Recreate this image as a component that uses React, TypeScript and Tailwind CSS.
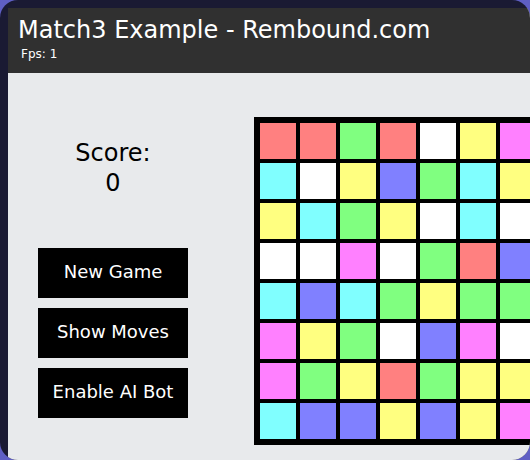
import React from "react";

// tile palette, same order as the game uses
const colors = [
  "#ff8080", // 0 red
  "#80ff80", // 1 green
  "#8080ff", // 2 blue
  "#ffff80", // 3 yellow
  "#ff80ff", // 4 magenta
  "#80ffff", // 5 cyan
  "#ffffff", // 6 white
];

const tileClass = [
  "bg-[#ff8080]",
  "bg-[#80ff80]",
  "bg-[#8080ff]",
  "bg-[#ffff80]",
  "bg-[#ff80ff]",
  "bg-[#80ffff]",
  "bg-[#ffffff]",
];

const board: number[][] = [
  [0, 0, 1, 0, 6, 3, 4, 1],
  [5, 6, 3, 2, 1, 5, 3, 2],
  [3, 5, 1, 3, 6, 5, 6, 4],
  [6, 6, 4, 6, 1, 0, 2, 3],
  [5, 2, 5, 1, 3, 1, 1, 0],
  [4, 3, 1, 6, 2, 4, 6, 5],
  [4, 1, 3, 0, 1, 3, 3, 2],
  [5, 2, 2, 3, 2, 3, 4, 6],
];

const buttons = ["New Game", "Show Moves", "Enable AI Bot"];

const font = { fontFamily: '"DejaVu Sans", Verdana, sans-serif' };

export default function App() {
  return (
    <div className="w-[530px] h-[460px] bg-[#5f5fc4]">
      <div
        className="w-full h-full rounded-[18px] overflow-hidden bg-[#1a1a33] pl-[8px] pt-[8px]"
        style={font}
      >
        <div className="w-[800px] h-[600px] bg-[#e8eaec]">
          <div className="h-[65px] bg-[#303030] text-white pl-[10px] pt-[10px]">
            <div className="text-[24px] leading-[24px]">
              Match3 Example - Rembound.com
            </div>
            <div className="text-[12px] leading-[12px] mt-[6px] pl-[3px]">
              Fps: 1
            </div>
          </div>

          <div className="flex">
            <div className="ml-[30px] w-[150px] shrink-0">
              <div className="mt-[65px] text-[24px] leading-[30px] text-black text-center">
                <div>Score:</div>
                <div>0</div>
              </div>
              <div className="mt-[50px] flex flex-col gap-[10px]">
                {buttons.map((b) => (
                  <div
                    key={b}
                    className="h-[50px] bg-black text-white text-[18px] leading-[18px] pt-[15px] text-center"
                  >
                    {b}
                  </div>
                ))}
              </div>
            </div>

            <div className="ml-[66px] mt-[44px] shrink-0 bg-black p-[6px] grid grid-cols-[repeat(8,36px)] gap-[4px]">
              {board.flatMap((row, r) =>
                row.map((c, i) => (
                  <div
                    key={`${r}-${i}`}
                    className={`w-[36px] h-[36px] ${tileClass[c]}`}
                    title={colors[c]}
                  />
                ))
              )}
            </div>
          </div>
        </div>
      </div>
    </div>
  );
}
